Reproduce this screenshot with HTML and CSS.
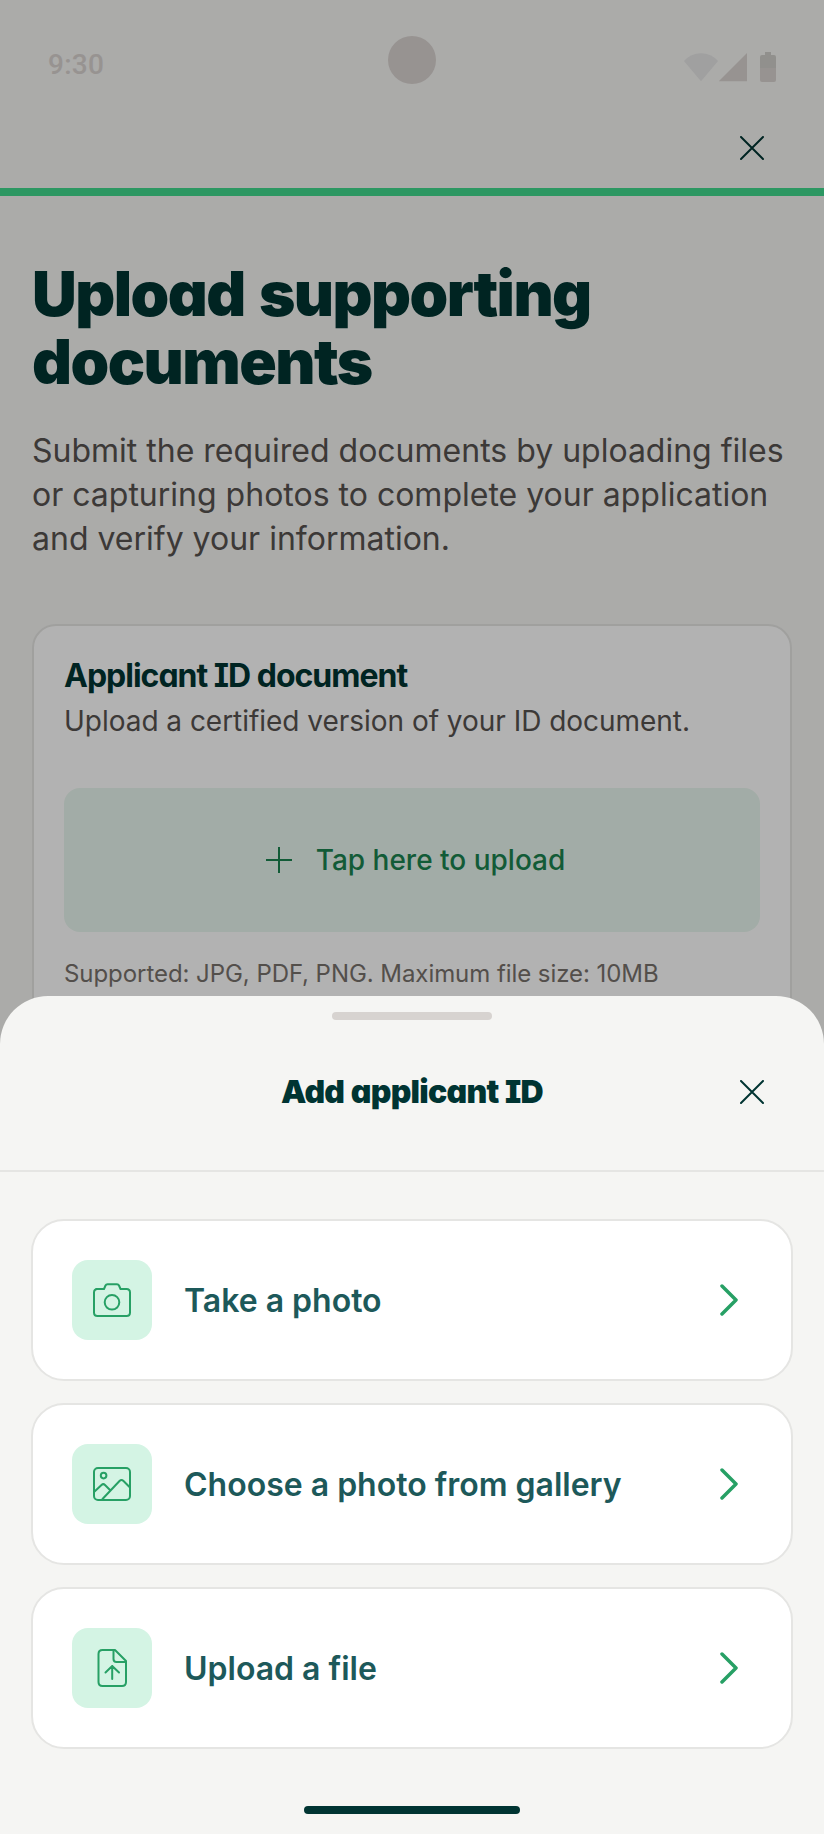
FILE: index.html
```html
<!DOCTYPE html>
<html lang="en">
<head>
<meta charset="utf-8">
<title>Upload supporting documents</title>
<link rel="stylesheet" href="styles.css">
</head>
<body>
<div class="screen">
  <main class="page">
    <div class="status-bar">
      <span class="clock">9:30</span>
      <span class="camera"></span>
      <svg class="status-icons" width="96" height="32" viewBox="0 0 96 32">
        <path class="wifi" d="M4 11Q11 3.200 21 3.200T38 11L21 31.200Z"/>
        <path class="signal" d="M39 31.200V31L67 3V31.200Z"/>
        <path class="battery-empty" d="M80 18V7Q80 5 82 5H85V2H91V5H94Q96 5 96 7V18Z"/>
        <path class="battery-level" d="M80 18H96V30Q96 32 94 32H82Q80 32 80 30Z"/>
      </svg>
    </div>
    <div class="toolbar">
      <svg class="close" width="24" height="24" viewBox="0 0 24 24"><path d="M1 1L23 23M23 1L1 23"/></svg>
    </div>
    <div class="progress"></div>
    <h1 class="headline">Upload supporting<br>documents</h1>
    <p class="intro">Submit the required documents by uploading files<br>or capturing photos to complete your application<br>and verify your information.</p>
    <section class="doc-card">
      <h2 class="doc-title">Applicant ID document</h2>
      <p class="doc-text">Upload a certified version of your ID document.</p>
      <div class="dropzone">
        <svg class="plus" width="26" height="26" viewBox="0 0 26 26"><path d="M13 0V26M0 13H26"/></svg>
        <span class="dropzone-label">Tap here to upload</span>
      </div>
      <p class="doc-hint">Supported: JPG, PDF, PNG. Maximum file size: 10MB</p>
    </section>
  </main>
  <div class="scrim"></div>
  <div class="sheet">
    <div class="handle"></div>
    <header class="sheet-header">
      <h2 class="sheet-title">Add applicant ID</h2>
      <svg class="close" width="24" height="24" viewBox="0 0 24 24"><path d="M1 1L23 23M23 1L1 23"/></svg>
    </header>
    <div class="options">
      <div class="option">
        <span class="option-icon">
          <svg width="40" height="40" viewBox="0 0 40 40"><path d="M4 9H12L13.500 5.500Q14.100 4.200 15.500 4.200H25Q26.400 4.200 27 5.500L28.500 9H34.500Q38 9 38 12.500V32.500Q38 36 34.500 36H5.500Q2 36 2 32.500V12.500Q2 9 5.500 9"/><circle cx="20" cy="22.300" r="7.300"/></svg>
        </span>
        <span class="option-label">Take a photo</span>
        <svg class="chevron" width="20" height="32" viewBox="0 0 20 32"><path d="M2 2L16 16L2 30"/></svg>
      </div>
      <div class="option">
        <span class="option-icon">
          <svg width="40" height="40" viewBox="0 0 40 40"><rect x="2" y="4" width="36" height="32" rx="4"/><circle cx="11.600" cy="11.600" r="2.800"/><path d="M2 28L9.500 21Q11.300 19.300 13 21L18 26M10.500 35L27.500 17Q29.500 15 31.500 17L38 23.500"/></svg>
        </span>
        <span class="option-label">Choose a photo from gallery</span>
        <svg class="chevron" width="20" height="32" viewBox="0 0 20 32"><path d="M2 2L16 16L2 30"/></svg>
      </div>
      <div class="option">
        <span class="option-icon">
          <svg width="40" height="40" viewBox="0 0 40 40"><path d="M10.500 2H23L34 13V34Q34 38 30 38H10.500Q6.500 38 6.500 34V6Q6.500 2 10.500 2ZM21.500 2V11Q21.500 14 24.500 14H34M20.200 31V18M13.500 24.500L20.200 18L27 24.500"/></svg>
        </span>
        <span class="option-label">Upload a file</span>
        <svg class="chevron" width="20" height="32" viewBox="0 0 20 32"><path d="M2 2L16 16L2 30"/></svg>
      </div>
    </div>
    <div class="home-indicator"></div>
  </div>
</div>
</body>
</html>
```
FILE: styles.css
```css
* { box-sizing: border-box; }
body, h1, h2, p { margin: 0; }
body { font-family: Inter, "Liberation Sans", sans-serif; }
svg { display: block; flex: none; fill: none; }

.screen { position: relative; width: 824px; height: 1834px; overflow: hidden; background: #f5f5f3; }

.page { display: flex; flex-direction: column; height: 1834px; overflow: hidden; }
.status-bar {
  display: grid; grid-template-columns: 1fr 48px 1fr; align-items: start;
  height: 108px; padding: 36px 48px 0;
}
.clock { margin-top: 13px; font: 500 28px/32px Roboto, sans-serif; letter-spacing: 0.28px; color: #d9d3d0; }
.camera { width: 48px; height: 48px; border-radius: 50%; background: #d9d3d0; }
.status-icons { justify-self: end; margin-top: 14px; }
.wifi { fill: #e5e5e5; }
.signal, .battery-level { fill: #d9d3d0; }
.battery-empty { fill: #d0cfca; }
.toolbar { display: flex; justify-content: flex-end; height: 80px; padding: 28px 60px 0; }
.close { stroke: #003432; stroke-width: 2; stroke-linecap: round; }
.progress { height: 8px; flex: none; background: #3fd88d; }

.headline {
  margin: 64px 32px 0; font-size: 62px; line-height: 68px; font-weight: 900;
  letter-spacing: -1.55px; word-spacing: 3.5px; color: #003432; font-feature-settings: "cv11", "cv08";
}
.intro { margin: 33px 32px 0; font-size: 32px; line-height: 44px; color: #575250; white-space: nowrap; }

.doc-card {
  margin: 63px 32px 0; height: 500px; padding: 30px 30px 0;
  border: 2px solid #e5e5e3; border-radius: 24px; background: #fff;
}
.doc-title {
  font-size: 32px; line-height: 40px; font-weight: 700; letter-spacing: -1px;
  color: #003432; font-feature-settings: "cv11", "cv08";
}
.doc-text { margin-top: 5px; font-size: 28px; line-height: 40px; letter-spacing: -0.03px; color: #575250; white-space: nowrap; }
.dropzone {
  display: flex; align-items: center; justify-content: center; gap: 24px;
  height: 144px; margin-top: 47px; padding-left: 7px; border-radius: 16px; background: #e9f7ef;
}
.plus { stroke: #1b8350; stroke-width: 2; }
.dropzone-label { font-size: 28px; line-height: 40px; font-weight: 500; color: #1b8350; }
.doc-hint { margin-top: 26px; font-size: 24px; line-height: 32px; letter-spacing: -0.06px; color: #78716c; white-space: nowrap; }

.scrim { position: absolute; inset: 0; background: rgba(0, 0, 0, 0.3); }

.sheet {
  position: absolute; left: 0; right: 0; bottom: 0; height: 838px;
  display: flex; flex-direction: column; align-items: center;
  padding-top: 16px; border-radius: 48px 48px 0 0; background: #f5f5f3;
}
.handle { width: 160px; height: 8px; flex: none; border-radius: 4px; background: #d7d3d0; }
.sheet-header {
  display: grid; grid-template-columns: 24px 1fr 24px; align-items: center;
  width: 100%; height: 152px; padding: 0 60px 6px; border-bottom: 2px solid #e5e5e3;
}
.sheet-title {
  grid-column: 2; text-align: center; font-size: 32px; line-height: 40px; font-weight: 900;
  letter-spacing: -0.75px; word-spacing: 1px; color: #003432; font-feature-settings: "cv11", "cv08";
}
.options { display: flex; flex-direction: column; gap: 22px; width: 100%; padding: 47px 31px 0; }
.option {
  display: flex; align-items: center; height: 162px; padding: 0 51px 0 39px;
  border: 2px solid #e5e5e3; border-radius: 33px; background: #fff;
}
.option-icon {
  display: flex; align-items: center; justify-content: center;
  width: 80px; height: 80px; border-radius: 16px; background: #d4f4e4;
}
.option-icon svg { stroke: #27a065; stroke-width: 2; stroke-linecap: round; stroke-linejoin: round; }
.option-label { flex: 1; margin: 1px 0 0 32px; font-size: 32px; line-height: 40px; font-weight: 600; color: #1d595a; white-space: nowrap; }
.chevron { stroke: #27a065; stroke-width: 3.500; stroke-linecap: round; stroke-linejoin: round; }
.home-indicator { width: 216px; height: 8px; margin-top: 57px; border-radius: 4px; background: #003432; }
```
